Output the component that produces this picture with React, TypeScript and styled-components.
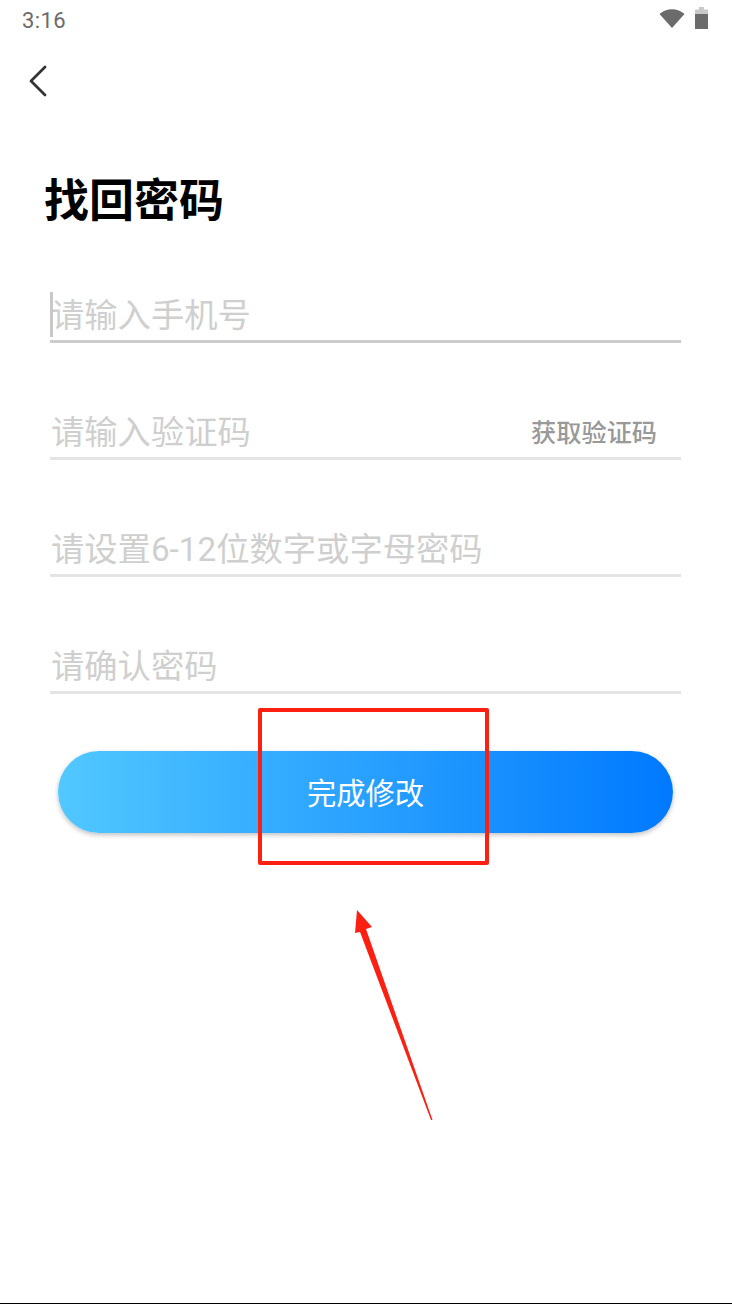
import styled, { createGlobalStyle } from 'styled-components'

const fields = [
    { id: 'phone', hint: '请输入手机号', focused: true },
    { id: 'code', hint: '请输入验证码', action: '获取验证码' },
    { id: 'pwd', hint: '请设置6-12位数字或字母密码' },
    { id: 'confirm', hint: '请确认密码' },
]

export default function App() {
    return <Screen>
        <GlobalStyle/>
        <StatusBar>
            <Clock>3:16</Clock>
            <StatusIcons>
                <svg width="26" height="20" viewBox="0 0 26 20">
                    <path d="M0.5 6 C7 -0.5 19 -0.5 25.5 6 L13 20 Z" fill="#6b6b6b"/>
                </svg>
                <svg width="13" height="22" viewBox="0 0 13 22">
                    <path d="M4 0 H9 V2.5 H13 V22 H0 V2.5 H4 Z" fill="#c9c9c9"/>
                    <rect x="0" y="7" width="13" height="15" fill="#6b6b6b"/>
                </svg>
            </StatusIcons>
        </StatusBar>
        <BackButton>
            <svg width="20" height="32" viewBox="0 0 20 32">
                <path d="M17 2 L3 16 L17 30" fill="none" stroke="#333" strokeWidth="2.8" strokeLinecap="round" strokeLinejoin="round"/>
            </svg>
        </BackButton>
        <Title>找回密码</Title>
        <Form>
            {fields.map(field => {
                return <Field key={field.id} $focused={field.focused}>
                    {field.focused && <Caret/>}
                    <Hint>{field.hint}</Hint>
                    {field.action && <Action>{field.action}</Action>}
                </Field>
            })}
        </Form>
        <Submit>完成修改</Submit>
        <Highlight/>
        <Arrow width="90" height="220" viewBox="0 0 90 220">
            <path d="M7 0 L22 17 L16 19 L82.5 210 L81 210 L10 22 L5 23 Z" fill="#fb2012"/>
        </Arrow>
        <BottomLine/>
    </Screen>
}

const GlobalStyle = createGlobalStyle`
    body {
        margin: 0;
        background: #fff;
        font-family: "Roboto", "Noto Sans CJK SC", sans-serif;
    }
`

const Screen = styled.div`
    position: relative;
    width: 732px;
    height: 1304px;
    overflow: hidden;
    background: #fff;
`

const StatusBar = styled.div`
    display: flex;
    align-items: center;
    justify-content: space-between;
    height: 40px;
    padding: 0 24px 0 22px;
`

const Clock = styled.span`
    font-size: 22px;
    letter-spacing: 0.4px;
    color: #6b6b6b;
`

const StatusIcons = styled.div`
    display: flex;
    align-items: center;
    gap: 10px;
    margin-top: -4px;
`

const BackButton = styled.div`
    display: flex;
    height: 32px;
    margin: 25px 0 0 28px;
`

const Title = styled.h1`
    margin: 75px 0 0 44px;
    height: 60px;
    font-size: 45px;
    line-height: 60px;
    font-weight: 700;
    color: #000;
`

const Form = styled.div`
    display: flex;
    flex-direction: column;
    gap: 37px;
    margin: 31px 51px 0 50px;
`

const Field = styled.div<{ $focused?: boolean }>`
    position: relative;
    display: flex;
    align-items: center;
    justify-content: space-between;
    box-sizing: border-box;
    height: 80px;
    padding: 29px 24px 0 1px;
    border-bottom: 3px solid ${p => (p.$focused ? '#cccccc' : '#e4e4e4')};
`

const Caret = styled.span`
    position: absolute;
    left: 0;
    top: 29px;
    width: 3px;
    height: 45px;
    background: #c8c8c8;
`

const Hint = styled.span`
    font-size: 33.3px;
    line-height: 44px;
    color: #cfcfcf;
`

const Action = styled.span`
    margin-bottom: 4px;
    font-size: 25.2px;
    font-weight: 500;
    color: #999;
`

const Submit = styled.button`
    display: block;
    width: 615px;
    height: 82px;
    margin: 57px 0 0 58px;
    padding: 0 0 2px;
    border: none;
    border-radius: 41px;
    background: linear-gradient(90deg, #51c8ff 0%, #0079ff 100%);
    box-shadow: 0 2px 5px rgba(0, 0, 0, 0.25);
    color: #fff;
    font-family: inherit;
    font-size: 29.3px;
`

const Highlight = styled.div`
    position: absolute;
    left: 258px;
    top: 708px;
    width: 231px;
    height: 157px;
    box-sizing: border-box;
    border: 4px solid #fb2012;
    border-radius: 2px;
`

const Arrow = styled.svg`
    position: absolute;
    left: 350px;
    top: 910px;
`

const BottomLine = styled.div`
    position: absolute;
    left: 0;
    right: 0;
    bottom: 0;
    height: 1px;
    background: #000;
`
